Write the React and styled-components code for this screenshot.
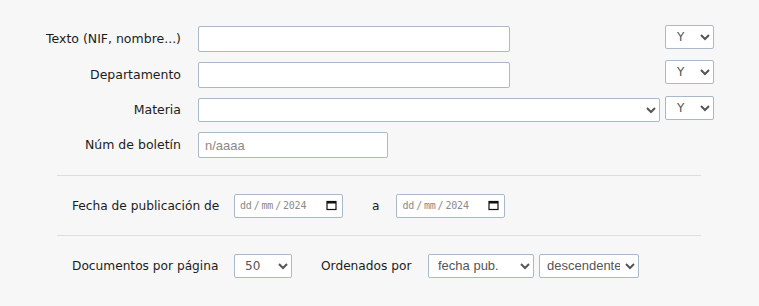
import styled, { createGlobalStyle } from "styled-components";

const GlobalStyle = createGlobalStyle`
  html, body {
    margin: 0;
    padding: 0;
    background: #f7f7f7;
  }
  body {
    font-family: "DejaVu Sans", Verdana, sans-serif;
    color: #1c1c1c;
  }
`;

const Page = styled.div`
  width: 759px;
  height: 306px;
  background: #f7f7f7;
  padding-top: 26px;
  box-sizing: border-box;
`;

const TopGrid = styled.div`
  display: grid;
  grid-template-columns: 181px 461px 48px;
  column-gap: 17px;
  row-gap: 10px;
  align-items: start;
  & > :nth-child(3n) {
    margin-left: -11px;
  }
`;

const Label = styled.label`
  font-size: 12.5px;
  line-height: ${({ $h }) => $h || 26}px;
  text-align: right;
  white-space: nowrap;
`;

const TextField = styled.input`
  box-sizing: border-box;
  width: ${({ $w }) => $w}px;
  height: 26px;
  margin: 0;
  border: 1px solid #a9b9c9;
  border-radius: 2px;
  background: #fff;
  padding: 0 6px;
  font-family: "Liberation Sans", Arial, sans-serif;
  font-size: 13px;
  color: #333;
  outline: none;
  &::placeholder {
    color: #8a8a8a;
  }
`;

const Select = styled.select`
  box-sizing: border-box;
  width: ${({ $w }) => $w}px;
  height: 24px;
  margin: ${({ $top }) => $top || 0}px 0 0;
  border: 1px solid #a9b9c9;
  border-radius: 2px;
  background: #fff;
  padding: 0 2px 0 ${({ $pad }) => $pad ?? 4}px;
  font-family: ${({ $sans }) =>
    $sans ? '"Liberation Sans", Arial, sans-serif' : '"DejaVu Sans", Verdana, sans-serif'};
  font-size: ${({ $sans }) => ($sans ? 13 : 12)}px;
  color: #555;
  outline: none;
`;

const Spacer = styled.div`
  height: ${({ $h }) => $h}px;
`;

const Divider = styled.hr`
  margin: 0 0 0 57px;
  width: 644px;
  border: 0;
  border-top: 1px solid #dddddd;
`;

const Section = styled.div`
  margin-left: 72px;
  height: 59px;
  display: flex;
  align-items: center;
  font-size: 12.2px;
`;

const RowLabel = styled.span`
  width: ${({ $w }) => $w}px;
  flex: none;
  white-space: nowrap;
`;

const Joiner = styled.span`
  margin: 0 ${({ $r }) => $r}px 0 ${({ $l }) => $l}px;
  white-space: nowrap;
`;

const DateBox = styled.div`
  box-sizing: border-box;
  width: 109px;
  height: 24px;
  display: flex;
  align-items: center;
  justify-content: space-between;
  padding: 0 5px 0 5px;
  background: #fff;
  border: 1px solid #a9b9c9;
  border-radius: 2px;
  font-family: "DejaVu Sans Mono", monospace;
  font-size: 10px;
  color: #8a8a8a;
  letter-spacing: -0.2px;
`;

const Sep = styled.span`
  margin: 0 2px;
`;

const CalendarIcon = () => (
  <svg width="11" height="11" viewBox="0 0 11 11">
    <rect x="1" y="1.5" width="9" height="8" fill="none" stroke="#111" strokeWidth="1.2" />
    <rect x="1" y="1.5" width="9" height="2" fill="#111" />
  </svg>
);

const DateInput = () => (
  <DateBox>
    <span>
      dd<Sep>/</Sep>mm<Sep>/</Sep>2024
    </span>
    <CalendarIcon />
  </DateBox>
);

const Gap = styled.span`
  display: inline-block;
  width: ${({ $w }) => $w}px;
`;

const LogicSelect = ({ top }) => (
  <Select $w={49} $pad={7} $top={top} defaultValue="Y">
    <option>Y</option>
    <option>O</option>
    <option>NO</option>
  </Select>
);

export default function App() {
  return (
    <Page>
      <GlobalStyle />
      <TopGrid>
        <Label>Texto (NIF, nombre...)</Label>
        <TextField $w={312} />
        <LogicSelect top={-1} />

        <Label>Departamento</Label>
        <TextField $w={312} />
        <LogicSelect top={-2} />

        <Label $h={24}>Materia</Label>
        <Select $w={462}>
          <option></option>
        </Select>
        <LogicSelect top={-2} />

        <Label>Núm de boletín</Label>
        <TextField $w={190} placeholder="n/aaaa" />
        <span />
      </TopGrid>

      <Spacer $h={17} />
      <Divider />
      <Section>
        <RowLabel $w={162}>Fecha de publicación de</RowLabel>
        <DateInput />
        <Joiner $l={29} $r={17}>a</Joiner>
        <DateInput />
      </Section>
      <Divider />
      <Section>
        <RowLabel $w={162}>Documentos por página</RowLabel>
        <Select $w={58} $pad={6} defaultValue="50">
          <option>25</option>
          <option>50</option>
          <option>100</option>
        </Select>
        <Gap $w={29} />
        <RowLabel $w={107}>Ordenados por</RowLabel>
        <Select $w={106} $sans $pad={5}>
          <option>fecha pub.</option>
          <option>relevancia</option>
        </Select>
        <Gap $w={5} />
        <Select $w={100} $sans $pad={3}>
          <option>descendente</option>
          <option>ascendente</option>
        </Select>
      </Section>
    </Page>
  );
}
